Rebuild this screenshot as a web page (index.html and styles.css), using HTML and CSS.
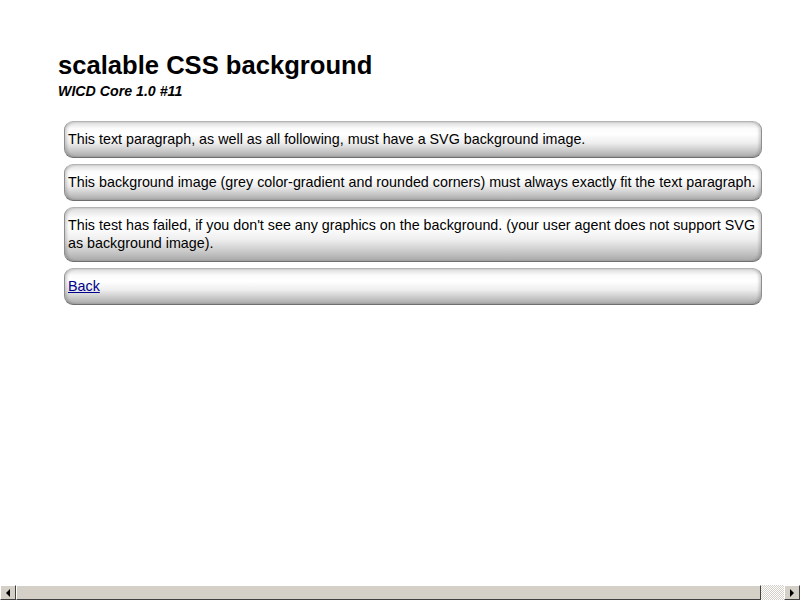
FILE: index.html
```html
<!DOCTYPE html>
<html>
<head>
<meta charset="utf-8">
<title>scalable CSS background</title>
<link rel="stylesheet" href="styles.css">
</head>
<body>
<div class="page">
  <h1 class="title">scalable CSS background</h1>
  <p class="subtitle">WICD Core 1.0 #11</p>
  <div class="boxes">
    <p class="box">This text paragraph, as well as all following, must have a SVG background image.</p>
    <p class="box">This background image (grey color-gradient and rounded corners) must always exactly fit the text paragraph.</p>
    <p class="box">This test has failed, if you don't see any graphics on the background. (your user agent does not support SVG as background image).</p>
    <p class="box"><a href="#" class="back">Back</a></p>
  </div>
</div>
<div class="hscroll">
  <div class="arrow left"><span class="tri tri-left"></span></div>
  <div class="trough">
    <div class="thumb"></div>
    <div class="rest"></div>
  </div>
  <div class="arrow right"><span class="tri tri-right"></span></div>
</div>
</body>
</html>
```
FILE: styles.css
```css
html, body {
  margin: 0;
  padding: 0;
  background: #fff;
  overflow: hidden;
}
body {
  font-family: "Liberation Sans", Arial, sans-serif;
  color: #000;
  width: 800px;
  height: 600px;
}
.page {
  padding: 50px 38px 0 58px;
}
.title {
  margin: 0;
  font-size: 25.6px;
  line-height: 30px;
  font-weight: bold;
}
.subtitle {
  margin: 3px 0 0 0;
  font-size: 14.2px;
  line-height: 16px;
  font-weight: bold;
  font-style: italic;
}
.boxes {
  margin: 22px 0 0 6px;
  display: flex;
  flex-direction: column;
  gap: 6px;
}
.box {
  margin: 0;
  width: 698px;
  box-sizing: border-box;
  padding: 8px 2px 9px 3px;
  font-size: 14.3px;
  line-height: 18px;
  border: 1px solid #8e8e8e;
  border-top-color: #b4b4b4;
  border-bottom-color: #6e6e6e;
  border-radius: 9px;
  background: linear-gradient(to bottom, #dcdcdc 0%, #fbfbfb 18%, #ffffff 35%, #eeeeee 60%, #c4c4c4 85%, #a8a8a8 100%);
  box-shadow: inset 3px 0 3px -1px rgba(0,0,0,0.18), inset -3px 0 3px -1px rgba(0,0,0,0.18);
}
.back {
  color: #00008b;
  text-decoration: underline;
}
.hscroll {
  position: fixed;
  left: 0;
  bottom: 0;
  width: 800px;
  height: 16px;
  display: flex;
  background: #d4d0c8;
  border-top: 1px solid #fff;
  box-sizing: border-box;
}
.arrow {
  width: 16px;
  height: 15px;
  box-sizing: border-box;
  background: #d4d0c8;
  border-top: 1px solid #fff;
  border-left: 1px solid #fff;
  border-right: 1px solid #404040;
  border-bottom: 1px solid #404040;
  display: flex;
  align-items: center;
  justify-content: center;
}
.tri {
  width: 0;
  height: 0;
  border-top: 4px solid transparent;
  border-bottom: 4px solid transparent;
}
.tri-left { border-right: 4px solid #000; }
.tri-right { border-left: 4px solid #000; }
.trough {
  flex: 1;
  display: flex;
}
.thumb {
  width: 745px;
  height: 15px;
  box-sizing: border-box;
  background: #d4d0c8;
  border-top: 1px solid #fff;
  border-left: 1px solid #fff;
  border-right: 1px solid #404040;
  border-bottom: 1px solid #404040;
}
.rest {
  flex: 1;
  background-color: #fff;
  background-image: repeating-conic-gradient(#d4d0c8 0 25%, #fff 0 50%);
  background-size: 2px 2px;
}
```
